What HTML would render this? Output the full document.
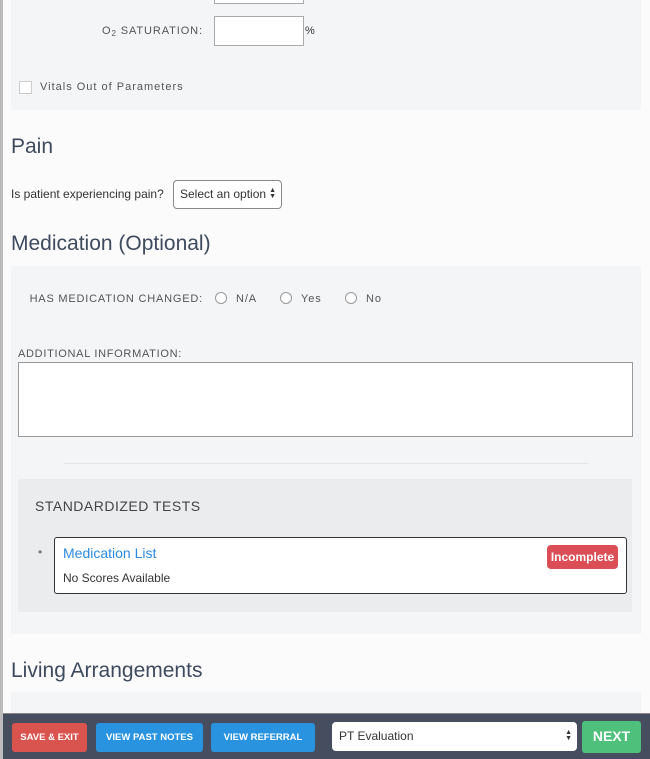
<!DOCTYPE html>
<html><head><style>
*{box-sizing:border-box;margin:0;padding:0}
body{width:650px;height:759px;overflow:hidden;background:#fbfbfb;font-family:"Liberation Sans",sans-serif;position:relative;color:#333}
.strip{position:absolute;left:0;top:0;width:3px;height:759px;background:#bbb}
.panel{position:absolute;left:11px;width:630px;background:#f4f5f6}
.abs{position:absolute;white-space:nowrap}
.lbl{font-size:11px;letter-spacing:.9px;color:#555}
h2{position:absolute;left:11px;font-weight:normal;color:#3e4a5e;font-size:21px}
.radio{position:absolute;width:12px;height:12px;border:1px solid #999;border-radius:50%;background:#fff}
.btn{position:absolute;top:723px;height:29px;color:#fff;font-size:9.5px;font-weight:bold;text-align:center;line-height:29px;border-radius:3px}
</style></head><body>
<div class="strip"></div>
<div class="panel" style="top:0;height:110px"></div>
<div class="abs" style="left:214px;top:-6px;width:90px;height:10px;border:1px solid #aaa;background:#fff"></div>
<div class="abs lbl" style="left:100px;top:25px;width:103px;text-align:right">O<span style="font-size:8px;vertical-align:-2px">2</span> SATURATION:</div>
<div class="abs" style="left:214px;top:16px;width:90px;height:30px;border:1px solid #aaa;background:#fff"></div>
<div class="abs" style="left:305px;top:25px;font-size:11px">%</div>
<div class="abs" style="left:19px;top:81px;width:13px;height:13px;border:1px solid #ccc;background:#fff"></div>
<div class="abs" style="left:40px;top:81px;font-size:11px;letter-spacing:1px;color:#555">Vitals Out of Parameters</div>
<h2 style="top:135px">Pain</h2>
<div class="abs" style="left:11px;top:187px;font-size:12px">Is patient experiencing pain?</div>
<div class="abs" style="left:173px;top:180px;width:109px;height:29px;border:1px solid #888;border-radius:4px;background:#fff;font-size:12px;padding:6px 0 0 6px">Select an option<span style="position:absolute;right:5px;top:7px;font-size:7px;line-height:6px">▲<br>▼</span></div>
<h2 style="top:232px">Medication (Optional)</h2>
<div class="panel" style="top:266px;height:368px"></div>
<div class="abs lbl" style="left:20px;top:293px;width:183px;text-align:right;letter-spacing:.8px">HAS MEDICATION CHANGED:</div>
<div class="radio" style="left:215px;top:292px"></div><div class="abs lbl" style="left:236px;top:293px">N/A</div>
<div class="radio" style="left:280px;top:292px"></div><div class="abs lbl" style="left:301px;top:293px">Yes</div>
<div class="radio" style="left:345px;top:292px"></div><div class="abs lbl" style="left:366px;top:293px">No</div>
<div class="abs lbl" style="left:18px;top:348px;letter-spacing:.7px">ADDITIONAL INFORMATION:</div>
<div class="abs" style="left:18px;top:362px;width:615px;height:75px;border:1px solid #999;background:#fff"></div>
<div class="abs" style="left:64px;top:463px;width:524px;height:1px;background:#e3e4e6"></div>
<div class="abs" style="left:18px;top:479px;width:614px;height:133px;background:#ebeced"></div>
<div class="abs" style="left:35px;top:498px;font-size:14px;letter-spacing:.5px;color:#444">STANDARDIZED TESTS</div>
<div class="abs" style="left:38px;top:545px;font-size:12px;color:#777">•</div>
<div class="abs" style="left:54px;top:537px;width:573px;height:57px;border:1px solid #333;border-radius:3px;background:#fff"></div>
<div class="abs" style="left:63px;top:545px;font-size:14px;color:#2b8ae0">Medication List</div>
<div class="abs" style="left:63px;top:571px;font-size:12px;color:#333">No Scores Available</div>
<div class="abs" style="left:547px;top:545px;width:71px;height:24px;background:#dc4e55;border-radius:4px;color:#fff;font-size:12px;font-weight:bold;text-align:center;line-height:24px">Incomplete</div>
<h2 style="top:659px">Living Arrangements</h2>
<div class="panel" style="top:692px;height:30px"></div>
<div class="abs" style="left:3px;top:713px;width:647px;height:46px;background:#454d5f;border-top:1px solid #888"></div>
<div class="btn" style="left:12px;width:75px;background:#d9534f">SAVE &amp; EXIT</div>
<div class="btn" style="left:96px;width:107px;background:#2a93e0">VIEW PAST NOTES</div>
<div class="btn" style="left:211px;width:104px;background:#2a93e0">VIEW REFERRAL</div>
<div class="abs" style="left:332px;top:722px;width:245px;height:29px;background:#fff;border-radius:4px;font-size:12px;padding:7px 0 0 7px">PT Evaluation<span style="position:absolute;right:5px;top:8px;font-size:7px;line-height:6px">▲<br>▼</span></div>
<div class="abs" style="left:582px;top:721px;width:59px;height:32px;background:#4fc07b;border-radius:3px;color:#fff;font-weight:bold;font-size:14px;text-align:center;line-height:30px">NEXT</div>
</body></html>
